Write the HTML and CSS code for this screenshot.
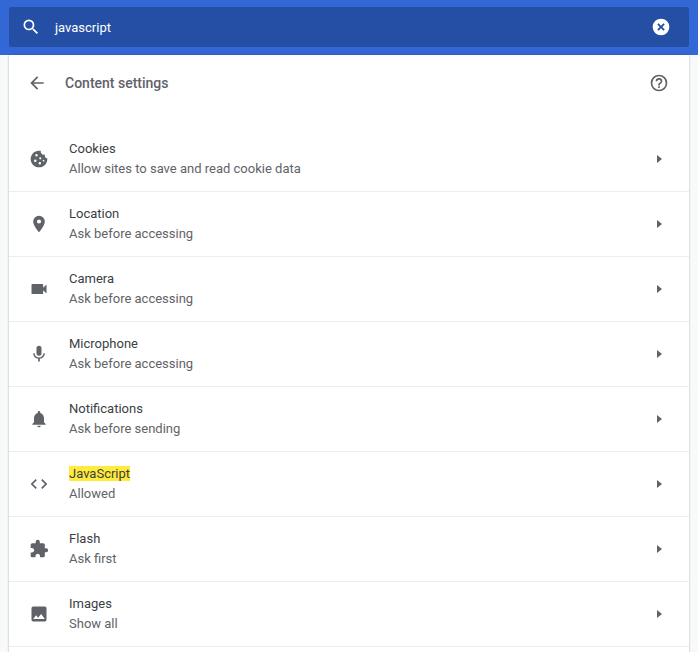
FILE: index.html
```html
<!DOCTYPE html>
<html lang="en">
<head>
    <meta charset="UTF-8">
    <meta name="viewport" content="width=device-width, initial-scale=1.0">
    <title>Content settings</title>
    <link rel="stylesheet" href="styles.css">
</head>
<body>
    <header class="toolbar">
        <div class="search-box">
            <svg class="search-icon" viewBox="0 0 24 24" width="20" height="20"><path d="M15.500 14h-.79l-.28-.27A6.470 6.470 0 0 0 16 9.500 6.500 6.500 0 1 0 9.500 16c1.610 0 3.090-.59 4.230-1.570l.27.28v.79l5 4.990L20.490 19l-4.990-5zm-6 0C7.010 14 5 11.990 5 9.500S7.010 5 9.500 5 14 7.010 14 9.500 11.990 14 9.500 14z"/></svg>
            <span class="search-text">javascript</span>
            <svg class="clear-icon" viewBox="0 0 24 24" width="20" height="20"><path fill-rule="evenodd" d="M12 2a10 10 0 1 0 0 20 10 10 0 0 0 0-20zm4.500 12.900L14.900 16.500 12 13.600l-2.900 2.900-1.600-1.600 2.900-2.900-2.900-2.900 1.600-1.600 2.900 2.900 2.900-2.900 1.600 1.600-2.900 2.900 2.900 2.900z"/></svg>
        </div>
    </header>

    <main class="card">
        <div class="card-header">
            <svg class="back-icon" viewBox="0 0 24 24" width="20" height="20"><path d="M20 11H7.830l5.590-5.590L12 4l-8 8 8 8 1.410-1.410L7.830 13H20v-2z"/></svg>
            <h1 class="page-title">Content settings</h1>
            <svg class="help-icon" viewBox="0 0 24 24" width="20" height="20"><path d="M11 18h2v-2h-2v2zm1-16a10 10 0 1 0 0 20 10 10 0 0 0 0-20zm0 18a8 8 0 1 1 0-16 8 8 0 0 1 0 16zm0-14a4 4 0 0 0-4 4h2a2 2 0 1 1 4 0c0 2-3 1.750-3 5h2c0-2.250 3-2.500 3-5a4 4 0 0 0-4-4z"/></svg>
        </div>

        <div class="row">
            <svg class="row-icon" viewBox="0 0 24 24" width="20" height="20"><path fill-rule="evenodd" d="M21.950 10.990c-1.790-.03-3.700-1.950-2.680-4.220-2.970 1-5.780-1.590-5.190-4.560C7.110.74 2 6.410 2 12c0 5.520 4.480 10 10 10 5.890 0 10.540-5.080 9.950-11.010zM9 9a1.500 1.500 0 1 1 0-3 1.500 1.500 0 0 1 0 3zm-1.500 6.500a1.500 1.500 0 1 1 0-3 1.500 1.500 0 0 1 0 3zm6-3a1.300 1.300 0 1 1 0-2.600 1.300 1.300 0 0 1 0 2.600zm-.5 6a1.500 1.500 0 1 1 0-3 1.500 1.500 0 0 1 0 3zm4.500-3.500a1 1 0 1 1 0-2 1 1 0 0 1 0 2z"/></svg>
            <div class="row-text">
                <div class="row-title">Cookies</div>
                <div class="row-sub">Allow sites to save and read cookie data</div>
            </div>
            <span class="arrow"></span>
        </div>
        <div class="row">
            <svg class="row-icon" viewBox="0 0 24 24" width="20" height="20"><path d="M12 2a7 7 0 0 0-7 7c0 5.250 7 13 7 13s7-7.750 7-13a7 7 0 0 0-7-7zm0 9.500a2.500 2.500 0 1 1 0-5 2.500 2.500 0 0 1 0 5z"/></svg>
            <div class="row-text">
                <div class="row-title">Location</div>
                <div class="row-sub">Ask before accessing</div>
            </div>
            <span class="arrow"></span>
        </div>
        <div class="row">
            <svg class="row-icon" viewBox="0 0 24 24" width="20" height="20"><path d="M17 10.500V7a1 1 0 0 0-1-1H4a1 1 0 0 0-1 1v10a1 1 0 0 0 1 1h12a1 1 0 0 0 1-1v-3.500l4 4v-11l-4 4z"/></svg>
            <div class="row-text">
                <div class="row-title">Camera</div>
                <div class="row-sub">Ask before accessing</div>
            </div>
            <span class="arrow"></span>
        </div>
        <div class="row">
            <svg class="row-icon" viewBox="0 0 24 24" width="20" height="20"><path d="M12 14a3 3 0 0 0 3-3V5a3 3 0 0 0-6 0v6a3 3 0 0 0 3 3zm5.300-3c0 3-2.540 5.100-5.300 5.100S6.700 14 6.700 11H5c0 3.410 2.720 6.230 6 6.720V21h2v-3.280c3.280-.48 6-3.300 6-6.720h-1.700z"/></svg>
            <div class="row-text">
                <div class="row-title">Microphone</div>
                <div class="row-sub">Ask before accessing</div>
            </div>
            <span class="arrow"></span>
        </div>
        <div class="row">
            <svg class="row-icon" viewBox="0 0 24 24" width="20" height="20"><path d="M12 22c1.100 0 2-.9 2-2h-4a2 2 0 0 0 2 2zm6-6v-5c0-3.070-1.640-5.640-4.500-6.320V4a1.500 1.500 0 0 0-3 0v.68C7.630 5.360 6 7.920 6 11v5l-2 2v1h16v-1l-2-2z"/></svg>
            <div class="row-text">
                <div class="row-title">Notifications</div>
                <div class="row-sub">Ask before sending</div>
            </div>
            <span class="arrow"></span>
        </div>
        <div class="row">
            <svg class="row-icon" viewBox="0 0 24 24" width="20" height="20"><path d="M9.400 16.600 4.800 12l4.600-4.600L8 6l-6 6 6 6 1.400-1.400zm5.200 0 4.600-4.600-4.600-4.600L16 6l6 6-6 6-1.400-1.400z"/></svg>
            <div class="row-text">
                <div class="row-title"><mark class="hit">JavaScript</mark></div>
                <div class="row-sub">Allowed</div>
            </div>
            <span class="arrow"></span>
        </div>
        <div class="row">
            <svg class="row-icon" viewBox="0 0 24 24" width="20" height="20"><path d="M20.500 11H19V7a2 2 0 0 0-2-2h-4V3.500a2.500 2.500 0 0 0-5 0V5H4a2 2 0 0 0-1.990 2v3.800H3.500c1.490 0 2.700 1.210 2.700 2.700s-1.210 2.700-2.700 2.700H2V20a2 2 0 0 0 2 2h3.800v-1.500c0-1.490 1.210-2.700 2.700-2.700s2.700 1.210 2.700 2.700V22H17a2 2 0 0 0 2-2v-4h1.500a2.500 2.500 0 0 0 0-5z"/></svg>
            <div class="row-text">
                <div class="row-title">Flash</div>
                <div class="row-sub">Ask first</div>
            </div>
            <span class="arrow"></span>
        </div>
        <div class="row">
            <svg class="row-icon" viewBox="0 0 24 24" width="20" height="20"><path d="M21 19V5a2 2 0 0 0-2-2H5a2 2 0 0 0-2 2v14a2 2 0 0 0 2 2h14a2 2 0 0 0 2-2zM8.500 13.500l2.500 3.010L14.500 12l4.500 6H5l3.500-4.500z"/></svg>
            <div class="row-text">
                <div class="row-title">Images</div>
                <div class="row-sub">Show all</div>
            </div>
            <span class="arrow"></span>
        </div>
    </main>
</body>
</html>
```

FILE: styles.css
```css
html, body {
    height: 100%;
}
body {
    margin: 0;
    background-color: #f8f9fa;
    font-family: Roboto, "Liberation Sans", sans-serif;
    font-size: 13px;
    overflow: hidden;
}
svg {
    display: block;
    flex: none;
}
.toolbar {
    height: 55px;
    padding: 7px 9px 8px;
    box-sizing: border-box;
    background-color: #3367d6;
}
.search-box {
    display: flex;
    align-items: center;
    height: 40px;
    padding: 0 18px 0 12px;
    border-radius: 2px;
    background-color: #254fa5;
    color: #fff;
}
.search-icon {
    fill: #fff;
}
.search-text {
    flex: 1;
    margin-left: 14px;
    font-size: 13px;
}
.clear-icon {
    fill: #fff;
}
.card {
    width: 680px;
    margin-left: 9px;
    background-color: #fff;
    box-shadow: 0 0 2px rgba(60, 64, 67, 0.4);
    padding-bottom: 6px;
}
.card-header {
    display: flex;
    align-items: center;
    height: 56px;
    margin-bottom: 16px;
    padding: 0 20px 0 18px;
}
.back-icon, .help-icon {
    fill: #5f6368;
}
.page-title {
    flex: 1;
    margin: 0 0 0 18px;
    font-size: 14px;
    font-weight: 500;
    color: #5f6368;
}
.row {
    display: flex;
    align-items: center;
    height: 65px;
    box-sizing: border-box;
    padding: 0 27px 0 20px;
    border-bottom: 1px solid #ebedef;
}
.row-icon {
    fill: #5f6368;
}
.row-text {
    flex: 1;
    margin-left: 20px;
    line-height: 20px;
}
.row-title {
    color: #3c4043;
}
.row-sub {
    color: #5f6368;
}
.hit {
    background-color: #ffeb3b;
    color: inherit;
}
.arrow {
    width: 0;
    height: 0;
    border-left: 5px solid #5f6368;
    border-top: 4px solid transparent;
    border-bottom: 4px solid transparent;
}
```
